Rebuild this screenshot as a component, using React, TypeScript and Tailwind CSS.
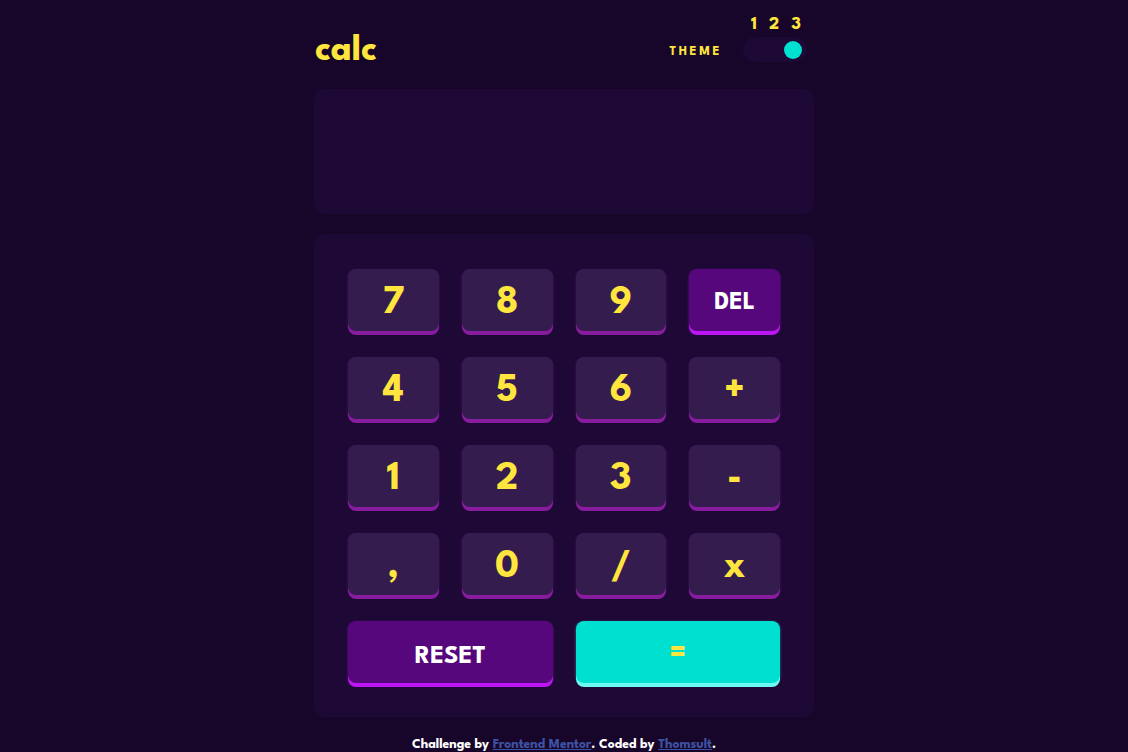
const keys = [
  { label: '7' },
  { label: '8' },
  { label: '9' },
  { label: 'DEL', kind: 'del' },
  { label: '4' },
  { label: '5' },
  { label: '6' },
  { label: '+' },
  { label: '1' },
  { label: '2' },
  { label: '3' },
  { label: '-' },
  { label: ',' },
  { label: '0' },
  { label: '/' },
  { label: 'x' },
]

const Key = ({ label, kind }: { label: string; kind?: string }) => {
  if (kind === 'del') {
    return (
      <button className="flex h-[62px] items-center justify-center rounded-[8px] bg-[#56077c] pt-[8px] text-[25px] font-bold text-white shadow-[0_4px_0_#be15f4,0_1px_3px_rgba(190,21,244,0.45)]">
        {label}
      </button>
    )
  }
  return (
    <button className="flex h-[62px] items-center justify-center rounded-[8px] bg-[#341c4f] pt-[7px] text-[40px] font-bold text-[#ffe53d] shadow-[0_4px_0_#881c9e,0_1px_3px_rgba(136,28,158,0.45)]">
      {label}
    </button>
  )
}

const App = () => {
  return (
    <div
      className="min-h-screen bg-[#17062a]"
      style={{ fontFamily: '"League Spartan", Lato, "Noto Sans", sans-serif' }}
    >
      <div className="mx-auto w-[500px] pt-[13px]">
        <header className="mb-[27px] flex items-end justify-between">
          <h1 className="mb-[-9px] pl-[1px] text-[37px] leading-[40px] font-bold text-[#ffe53d]">calc</h1>
          <div className="flex items-end gap-[21px]">
            <span className="flex h-[25px] items-center pt-[7px] text-[13px] font-bold tracking-[2.6px] text-[#ffe53d]">
              THEME
            </span>
            <div className="mr-[7px] flex flex-col gap-[6px]">
              <div className="flex h-[18px] justify-between pt-[3px] pr-[6px] pl-[8px] text-[18px] leading-[18px] font-bold text-[#ffe53d]">
                <span>1</span>
                <span>2</span>
                <span>3</span>
              </div>
              <div className="flex h-[25px] w-[64px] items-center justify-end rounded-full bg-[#1e0836] pr-[5px]">
                <div className="h-[18px] w-[18px] rounded-full bg-[#00e0d1]" />
              </div>
            </div>
          </div>
        </header>

        <div className="mb-[20px] h-[125px] rounded-[10px] bg-[#1e0836]" />

        <div className="rounded-[10px] bg-[#1e0836] px-[34px] pt-[35px] pb-[34px]">
          <div className="grid grid-cols-4 gap-x-[23px] gap-y-[26px]">
            {keys.map(k => (
              <Key key={k.label} label={k.label} kind={k.kind} />
            ))}
            <button className="col-span-2 flex h-[62px] items-center justify-center rounded-[8px] bg-[#56077c] pt-[10px] text-[26px] font-bold text-white shadow-[0_4px_0_#be15f4,0_1px_3px_rgba(190,21,244,0.45)]">
              RESET
            </button>
            <button className="col-span-2 flex h-[62px] items-center justify-center rounded-[8px] bg-[#00e0d1] pt-[6px] text-[32px] font-bold text-[#ffe53d] shadow-[0_4px_0_#6cf9f1,0_1px_3px_rgba(108,249,241,0.45)]">
              =
            </button>
          </div>
        </div>

        <footer className="pt-[18px] pb-[6px] text-center text-[13.5px] font-bold text-white">
          Challenge by{' '}
          <a href="#" className="text-[#3e52a3] underline">
            Frontend Mentor
          </a>
          . Coded by{' '}
          <a href="#" className="text-[#3e52a3] underline">
            Thomsult
          </a>
          .
        </footer>
      </div>
    </div>
  )
}

export default App
